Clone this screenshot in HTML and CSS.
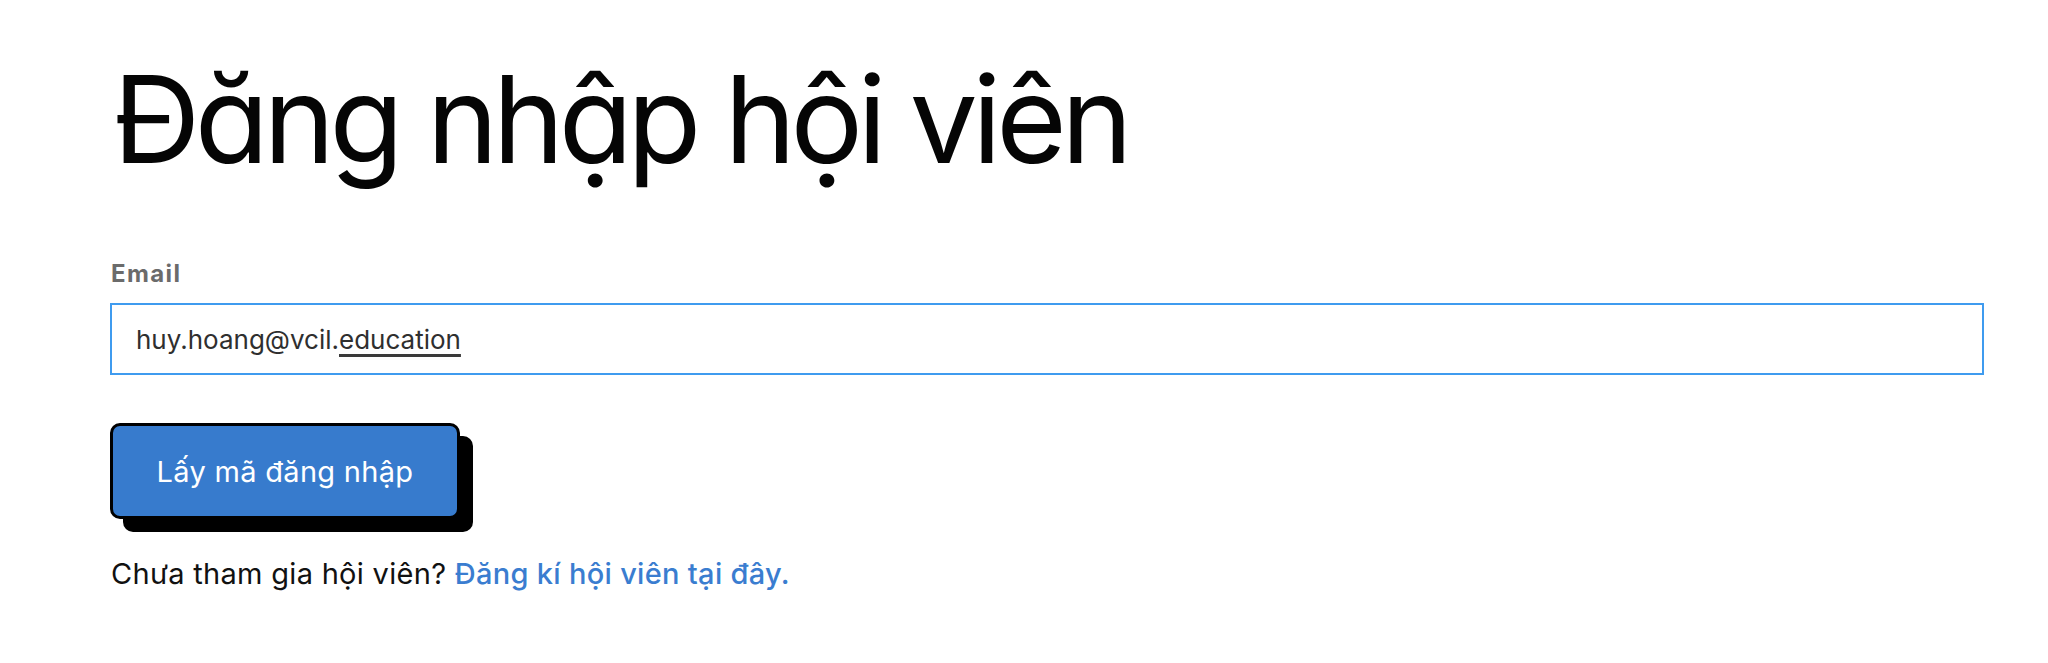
FILE: index.html
```html
<!DOCTYPE html>
<html lang="vi">
<head>
<meta charset="utf-8">
<title>Đăng nhập hội viên</title>
<link rel="stylesheet" href="styles.css">
</head>
<body>
<main class="page">
  <h1 class="title">Đăng nhập hội viên</h1>
  <form class="login-form">
    <label class="field-label" for="email">Email</label>
    <div class="field-input">
      <span class="field-value">huy.hoang@vcil.<span class="autolink">education</span></span>
    </div>
    <button type="button" class="submit-btn">Lấy mã đăng nhập</button>
    <p class="signup-note">Chưa tham gia hội viên? <a class="signup-link" href="#">Đăng kí hội viên tại đây.</a></p>
  </form>
</main>
</body>
</html>
```

FILE: styles.css
```css
html, body {
  margin: 0;
  padding: 0;
  background: #ffffff;
}

body {
  font-family: Inter, "Noto Sans", "Liberation Sans", sans-serif;
  color: #111111;
}

.page {
  padding: 0 64px 0 110px;
}

.title {
  margin: 59px 0 0 3px;
  font-family: Inter, "Noto Sans", sans-serif;
  font-feature-settings: "cv11" 1, "ss02" 1;
  font-weight: 400;
  font-size: 121px;
  line-height: 1;
  letter-spacing: -5.5px;
  color: #050505;
}

.login-form {
  display: flex;
  flex-direction: column;
  align-items: flex-start;
  margin-top: 81px;
}

.field-label {
  font-size: 24px;
  font-weight: 700;
  line-height: 26px;
  color: #6b6b6b;
  margin-left: 1px;
  letter-spacing: 1.4px;
}

.field-input {
  box-sizing: border-box;
  align-self: stretch;
  margin-top: 16px;
  height: 72px;
  border: 2px solid #3f9bef;
  display: flex;
  align-items: center;
  padding: 0 24px;
}

.field-value {
  font-size: 26px;
  color: #2f2f2f;
  letter-spacing: 0;
}

.autolink {
  text-decoration: underline;
  text-decoration-thickness: 3px;
  text-underline-offset: 5px;
  text-decoration-color: #3a3a3a;
}

.submit-btn {
  box-sizing: border-box;
  margin-top: 48px;
  width: 350px;
  height: 96px;
  background: #377bcd;
  color: #ffffff;
  border: 3px solid #000000;
  border-radius: 10px;
  box-shadow: 13px 13px 0 #000000;
  font-family: Inter, "Noto Sans", sans-serif;
  font-size: 29px;
  font-weight: 400;
  padding: 0;
  letter-spacing: 0.3px;
}

.signup-note {
  margin: 37px 0 0 1px;
  font-size: 29px;
  line-height: 36px;
  color: #111111;
  letter-spacing: 0.3px;
}

.signup-link {
  color: #3a7dd0;
  font-weight: 500;
  text-decoration: none;
}
```
